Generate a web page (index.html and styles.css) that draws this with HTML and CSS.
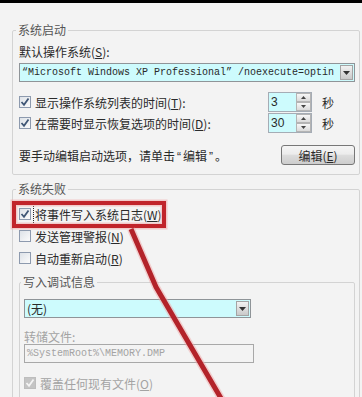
FILE: index.html
```html
<!DOCTYPE html>
<html lang="zh-CN">
<head>
    <meta charset="UTF-8">
    <meta name="viewport" content="width=device-width, initial-scale=1.0">
    <title>启动和故障恢复</title>
    <link rel="stylesheet" href="styles.css">
</head>
<body>
    <div class="topbar"></div>

    <fieldset class="group startup">
        <legend>系统启动</legend>
        <div class="label">默认操作系统(<u>S</u>):</div>
        <div class="combo wide">
            <span class="combo-text mono">“Microsoft Windows XP Professional” /noexecute=optin</span>
            <span class="drop"><svg width="7" height="4" viewBox="0 0 7 4"><path d="M0 0h7L3.5 4z" fill="#333"/></svg></span>
        </div>

        <div class="spin-row first">
            <span class="check on"><svg width="10" height="10" viewBox="0 0 10 10"><path d="M1.5 5l2.5 2.8L8.5 1.5" fill="none" stroke="#3f5675" stroke-width="1.8"/></svg></span>
            <span class="grow">显示操作系统列表的时间(<u>T</u>):</span>
            <span class="spinner">
                <span class="spin-field">3</span>
                <span class="spin-btns">
                    <span><svg width="5" height="3" viewBox="0 0 5 3"><path d="M0 3h5L2.5 0z" fill="#444"/></svg></span>
                    <span><svg width="5" height="3" viewBox="0 0 5 3"><path d="M0 0h5L2.5 3z" fill="#444"/></svg></span>
                </span>
            </span>
            <span class="unit">秒</span>
        </div>
        <div class="spin-row second">
            <span class="check on"><svg width="10" height="10" viewBox="0 0 10 10"><path d="M1.5 5l2.5 2.8L8.5 1.5" fill="none" stroke="#3f5675" stroke-width="1.8"/></svg></span>
            <span class="grow">在需要时显示恢复选项的时间(<u>D</u>):</span>
            <span class="spinner">
                <span class="spin-field">30</span>
                <span class="spin-btns">
                    <span><svg width="5" height="3" viewBox="0 0 5 3"><path d="M0 3h5L2.5 0z" fill="#444"/></svg></span>
                    <span><svg width="5" height="3" viewBox="0 0 5 3"><path d="M0 0h5L2.5 3z" fill="#444"/></svg></span>
                </span>
            </span>
            <span class="unit">秒</span>
        </div>

        <div class="edit-row">
            <span>要手动编辑启动选项，请单击<span class="quote">“</span>编辑<span class="quote">”</span>。</span>
            <span class="btn">编辑(<u>E</u>)</span>
        </div>
    </fieldset>

    <fieldset class="group failure">
        <legend>系统失败</legend>
        <div class="check-row">
            <span class="check on"><svg width="10" height="10" viewBox="0 0 10 10"><path d="M1.5 5l2.5 2.8L8.5 1.5" fill="none" stroke="#3f5675" stroke-width="1.8"/></svg></span>
            <span class="focus">将事件写入系统日志(<u>W</u>)</span>
        </div>
        <div class="check-row">
            <span class="check"></span>
            <span>发送管理警报(<u>N</u>)</span>
        </div>
        <div class="check-row">
            <span class="check"></span>
            <span>自动重新启动(<u>R</u>)</span>
        </div>

        <fieldset class="group debug">
            <legend>写入调试信息</legend>
            <div class="combo small">
                <span class="combo-text">(无)</span>
                <span class="drop"><svg width="7" height="4" viewBox="0 0 7 4"><path d="M0 0h7L3.5 4z" fill="#333"/></svg></span>
            </div>
            <div class="label dim">转储文件:</div>
            <div class="field mono">%SystemRoot%\MEMORY.DMP</div>
            <div class="check-row disabled">
                <span class="check on"><svg width="10" height="10" viewBox="0 0 10 10"><path d="M1.5 5l2.5 2.8L8.5 1.5" fill="none" stroke="#f4f4f4" stroke-width="1.8"/></svg></span>
                <span>覆盖任何现有文件(<u>O</u>)</span>
            </div>
        </fieldset>
    </fieldset>

    <!-- red annotation drawn over the dialog -->
    <svg class="marker" width="362" height="397" viewBox="0 0 362 397">
        <rect x="14" y="203" width="150" height="23" fill="none" stroke="#f0a8a8" stroke-width="7" opacity="0.55"/>
        <rect x="14" y="203" width="150" height="23" fill="none" stroke="#c1242b" stroke-width="4"/>
        <polyline points="131,229 156,287 222,400" fill="none" stroke="#f0a8a8" stroke-width="8" stroke-linejoin="round" opacity="0.5"/>
        <polyline points="131,229 156,287 222,400" fill="none" stroke="#b3232a" stroke-width="5" stroke-linejoin="round"/>
    </svg>
</body>
</html>
```

FILE: styles.css
```css
body {
    margin: 0;
    height: 397px;
    overflow: hidden;
    background: #f3f3f3;
    font-family: "Noto Sans CJK SC", sans-serif;
    font-size: 12px;
    color: #2a2a2a;
}

u {
    text-decoration: underline;
}

.topbar {
    height: 3px;
    background: #000;
}

.group {
    margin: 19px 2px 0 12px;
    padding: 6px 4px 9px 6px;
    border: 1px solid #d3d3d3;
    border-radius: 2px;
    min-width: 0;
}

.group legend {
    margin-left: -3px;
    padding: 0 2px;
    line-height: 16px;
    color: #555;
}

.failure {
    margin-top: 6px;
    padding-bottom: 20px;
}

.debug {
    margin: 5px 0 0 0;
    padding: 9px 0 20px 4px;
}

.label {
    line-height: 16px;
}

.mono {
    font-family: "Liberation Mono", monospace;
    font-size: 10px;
}

.quote {
    font-family: "Liberation Sans", sans-serif;
    margin: 0 2px;
}

.combo {
    display: flex;
    align-items: center;
    height: 19px;
    box-sizing: border-box;
    border: 1px solid #8f9498;
    background: #cdfbfd;
}

.combo.wide {
    margin-top: 3px;
}

.combo.small {
    width: 227px;
}

.combo-text {
    flex: 1;
    padding-left: 2px;
    white-space: nowrap;
    overflow: hidden;
}

.drop {
    display: flex;
    align-items: center;
    justify-content: center;
    width: 13px;
    height: 15px;
    margin-right: 1px;
    box-sizing: border-box;
    border: 1px solid #a4a4a4;
    background: linear-gradient(#f2f2f2, #c9c9c9);
}

.spin-row {
    display: flex;
    align-items: center;
    height: 20px;
}

.spin-row.first {
    margin-top: 10px;
}

.spin-row.second {
    margin-top: 1px;
}

.check {
    display: flex;
    align-items: center;
    justify-content: center;
    flex: none;
    width: 12px;
    height: 12px;
    margin-right: 4px;
    box-sizing: border-box;
    border: 1px solid #8d9aae;
    background: linear-gradient(135deg, #dde2e8, #fbfbfb);
}

.grow {
    flex: 1;
}

.spinner {
    display: flex;
    width: 44px;
    height: 20px;
    box-sizing: border-box;
    border: 1px solid #a5acb5;
}

.spin-field {
    flex: 1;
    padding-left: 2px;
    background: #cdfbfd;
    font-family: "Liberation Sans", sans-serif;
    font-size: 12px;
    line-height: 18px;
}

.spin-btns {
    display: flex;
    flex-direction: column;
    width: 15px;
}

.spin-btns span {
    display: flex;
    flex: 1;
    align-items: center;
    justify-content: center;
    border: 1px solid #b4b4b4;
    background: linear-gradient(#f7f7f7, #dadada);
}

.unit {
    margin: 0 21px 0 10px;
}

.edit-row {
    display: flex;
    align-items: center;
    justify-content: space-between;
    height: 20px;
    margin-top: 12px;
}

.btn {
    display: flex;
    align-items: center;
    justify-content: center;
    width: 74px;
    height: 20px;
    box-sizing: border-box;
    border: 1px solid #777;
    border-radius: 3px;
    background: linear-gradient(#f5f5f5 0%, #ececec 45%, #dcdcdc 52%, #cdcdcd 100%);
}

.check-row {
    display: flex;
    align-items: center;
    height: 22px;
}

.focus {
    outline: 1px dotted #222;
    outline-offset: 1px;
}

.dim {
    margin-top: 12px;
    line-height: 14px;
    color: #a3a3a3;
}

.field {
    width: 230px;
    height: 19px;
    box-sizing: border-box;
    padding-left: 2px;
    border: 1px solid #a8a8a8;
    line-height: 17px;
    color: #a3a3a3;
}

.check-row.disabled {
    height: 20px;
    margin-top: 10px;
    color: #a3a3a3;
}

.check-row.disabled .check {
    border-color: #bdbdbd;
    background: #c4c4c4;
}

.marker {
    position: absolute;
    top: 0;
    left: 0;
    pointer-events: none;
}
```
